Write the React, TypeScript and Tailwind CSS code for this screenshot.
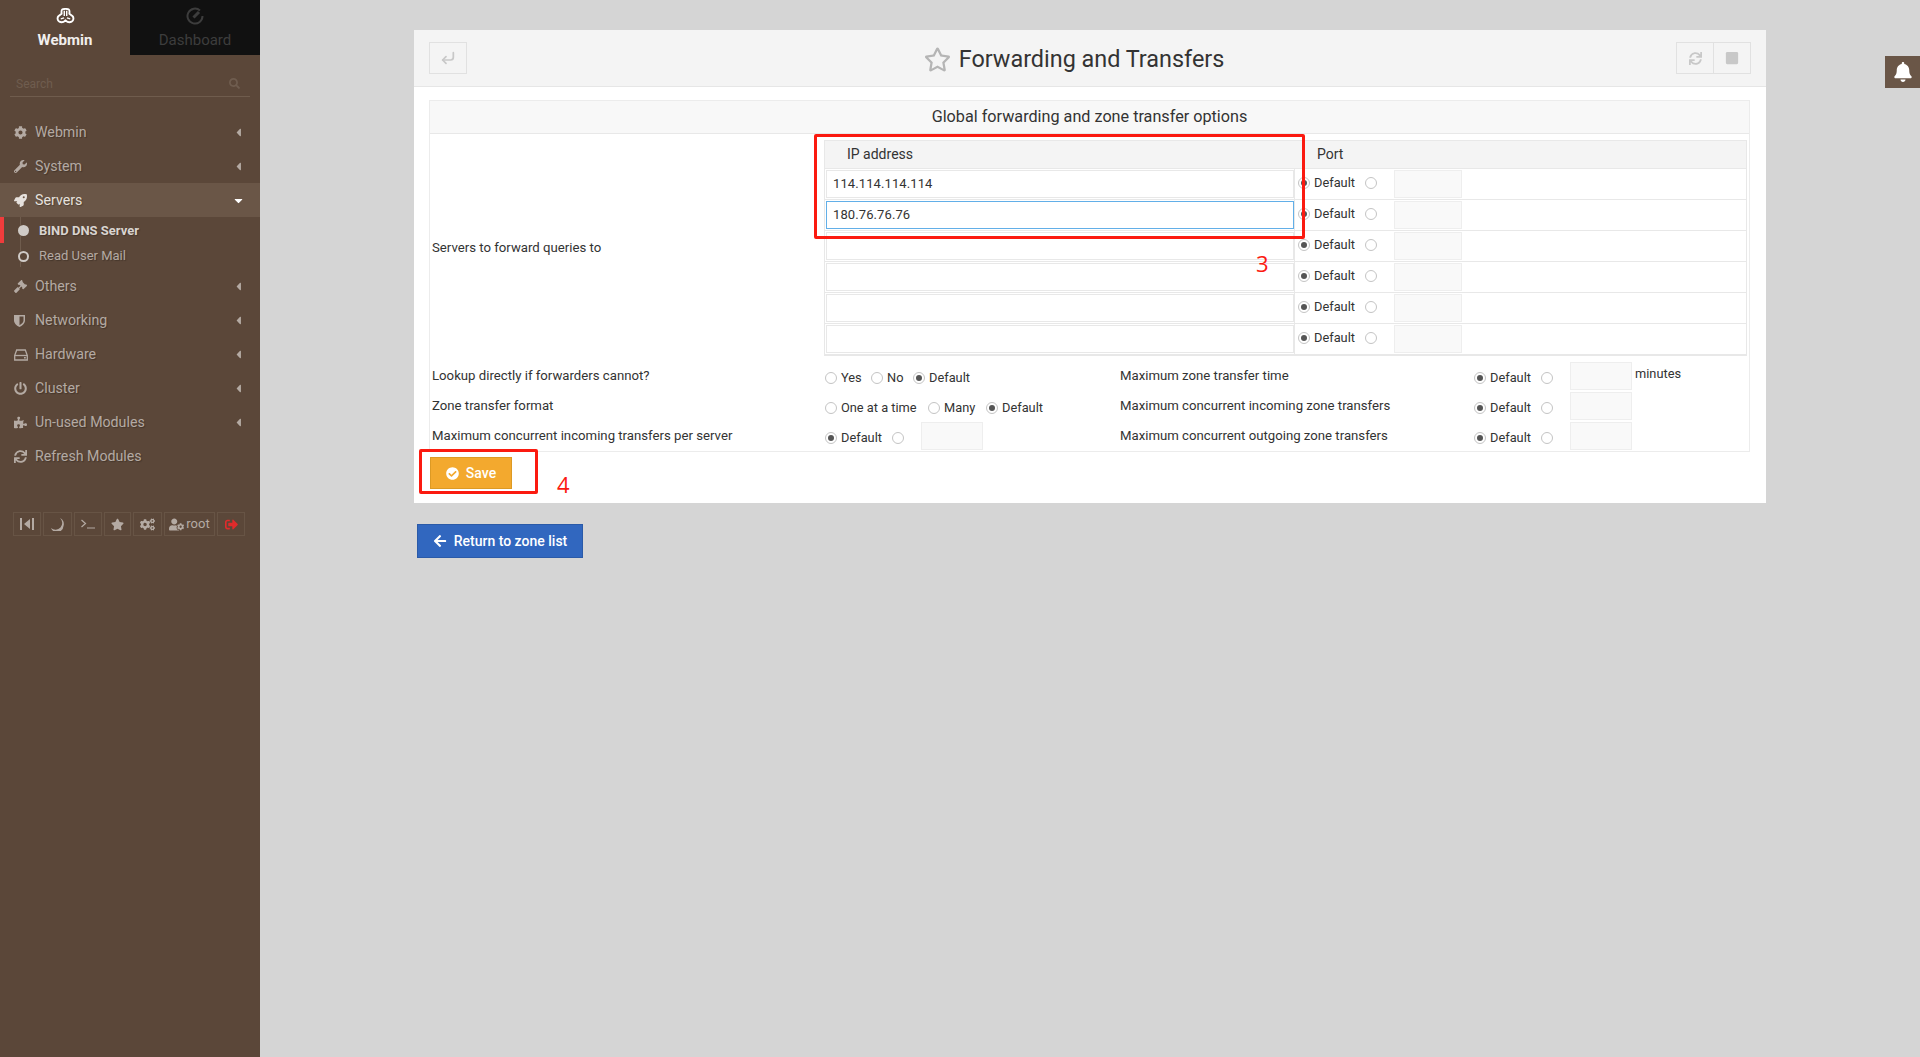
import React from "react";
import {
  FaCog, FaWrench, FaRocket, FaGavel, FaPowerOff, FaPuzzlePiece, FaSync,
  FaRegStar, FaBell, FaCheckCircle, FaArrowLeft, FaSignOutAlt, FaCogs, FaUserCog, FaStar, FaSearch, FaCaretLeft, FaCaretDown, FaStop,
} from "react-icons/fa";
import { CornerDownLeft } from "lucide-react";

function Logo() {
  return (
    <svg width="19" height="17" viewBox="0 0 20 18" fill="none" stroke="#fff" strokeWidth="2" strokeLinejoin="round" className="block">
      <path d="M6.500 1.500c1-.7 6-.7 7 0 .8.6.8 3 .6 4.500l3.200 2.500c1.800 1.600 1.200 5-.8 6-1.800.9-4.500.6-6.500-1.500-2 2.100-4.700 2.400-6.500 1.500-2-1-2.600-4.400-.8-6L5.900 6c-.2-1.500-.2-3.900.6-4.500z" />
      <path d="M8.700 3v5.500M11.300 3v5.500M5 11.500l3.500-1M15 11.500l-3.500-1" strokeWidth="1.500" />
    </svg>
  );
}

function Gauge() {
  return (
    <svg width="18" height="18" viewBox="0 0 18 18" fill="none" stroke="#3d3d3d" strokeWidth="2" className="block">
      <path d="M14 3.500A7.500 7.500 0 1 0 16.500 9" />
      <path d="M7.500 10.500 13 5" strokeWidth="3" />
    </svg>
  );
}

function Shield() {
  return (
    <svg width="11" height="13" viewBox="0 0 11 13" fill="#b4aaa3" className="block">
      <path d="M0 1h11v5.500c0 3-3 5.300-5.500 6.500C3 11.800 0 9.500 0 6.500zM5.500 2.500v8.700c1.800-1 4-2.800 4-4.700v-4z" fillRule="evenodd" />
    </svg>
  );
}

function Hdd() {
  return (
    <svg width="14" height="12" viewBox="0 0 14 12" fill="none" stroke="#b4aaa3" strokeWidth="1.300" className="block">
      <path d="M.7 6.500 2.700 1h8.600l2 5.500V11H.7z" />
      <path d="M.7 6.500h12.600" />
      <path d="M10 8.800h1.800" strokeWidth="1.500" />
    </svg>
  );
}

function MenuItem({ icon, label, open, active, arrow = true }: { icon: React.ReactNode; label: string; open?: boolean; active?: boolean; arrow?: boolean }) {
  return (
    <div className={`flex h-[34px] items-center pl-[14px] pr-[15px] pt-[1px] text-[14.200px] [text-shadow:1px_1px_1px_rgba(0,0,0,0.25)] ${active ? "bg-[#6a5647] text-[#e6e1dd]" : "text-[#b4aaa3]"}`}>
      <span className="flex w-[21px] shrink-0 items-center text-[13px]">{icon}</span>
      <span className="flex-1">{label}</span>
      {arrow && (open ? <FaCaretDown className="text-[13px] text-white" /> : <FaCaretLeft className="text-[13px]" />)}
    </div>
  );
}

function SideBtn({ w, children }: { w: string; children: React.ReactNode }) {
  return <div className={`flex h-[24px] items-center justify-center gap-[2px] border border-[#675445] text-[13px] text-[#b4aaa3] ${w}`}>{children}</div>;
}

function Sidebar() {
  return (
    <aside className="flex w-[260px] shrink-0 flex-col bg-[#5b4739]">
      <div className="flex h-[55px]">
        <div className="flex w-[130px] flex-col items-center pt-[8px] text-[15px] font-bold text-[#f2efed]">
          <Logo />
          <span className="mt-[7px] leading-[17px]">Webmin</span>
        </div>
        <div className="flex w-[130px] flex-col items-center bg-[#111111] pt-[7px] text-[15px] text-[#3d3d3d]">
          <Gauge />
          <span className="mt-[7px] leading-[17px]">Dashboard</span>
        </div>
      </div>
      <div className="mx-[10px] mt-[18px] flex h-[24px] items-center justify-between border-b border-[#6f5c4d] pb-[2px] pl-[6px] pr-[10px] text-[12px] text-[#6f5d4f]">
        <span>Search</span>
        <FaSearch className="text-[11px]" />
      </div>
      <div className="mt-[18px] flex flex-col">
        <MenuItem icon={<FaCog />} label="Webmin" />
        <MenuItem icon={<FaWrench />} label="System" />
        <MenuItem icon={<FaRocket />} label="Servers" open active />
        <div className="relative flex h-[52px] flex-col text-[13px] [text-shadow:1px_1px_1px_rgba(0,0,0,0.25)]">
          <div className="absolute bottom-[2px] left-[20px] top-0 w-px bg-[#6f5c4d]" />
          <div className="flex h-[26px] items-center border-l-4 border-[#f03c3c] pl-[14px] pt-[1px] font-bold text-[#d9d4d0]">
            <span className="z-10 mr-[10px] h-[11px] w-[11px] rounded-full bg-[#d0cbc7]" />
            <span>BIND DNS Server</span>
          </div>
          <div className="flex h-[25px] items-center pl-[18px] pt-[1px] text-[#b4aaa3]">
            <span className="z-10 mr-[10px] h-[11px] w-[11px] rounded-full border-2 border-[#d0cbc7] bg-[#5b4739]" />
            <span>Read User Mail</span>
          </div>
        </div>
        <MenuItem icon={<FaGavel />} label="Others" />
        <MenuItem icon={<Shield />} label="Networking" />
        <MenuItem icon={<Hdd />} label="Hardware" />
        <MenuItem icon={<FaPowerOff />} label="Cluster" />
        <MenuItem icon={<FaPuzzlePiece />} label="Un-used Modules" />
        <MenuItem icon={<FaSync />} label="Refresh Modules" arrow={false} />
      </div>
      <div className="ml-[13px] mt-[39px] flex gap-[2px]">
        <SideBtn w="w-[28px]">
          <svg width="14" height="12" viewBox="0 0 14 12" fill="#b4aaa3"><rect x="0" y="0" width="2" height="12" /><rect x="12" y="0" width="2" height="12" /><path d="M10 1v10L4 6z" /></svg>
        </SideBtn>
        <SideBtn w="w-[29px]">
          <svg width="13" height="13" viewBox="0 0 13 13" fill="#b4aaa3"><path d="M9 0a6.500 6.500 0 0 1-9 10 6.500 6.500 0 0 0 12.500-2A6.500 6.500 0 0 0 9 0z" /></svg>
        </SideBtn>
        <SideBtn w="w-[28px]">
          <svg width="14" height="10" viewBox="0 0 14 10" fill="none" stroke="#b4aaa3" strokeWidth="1.200"><path d="M0.500 1 4.500 4.500 0.500 8M6 9h8" /></svg>
        </SideBtn>
        <SideBtn w="w-[27px]"><FaStar /></SideBtn>
        <SideBtn w="w-[29px]"><FaCogs className="text-[15px]" /></SideBtn>
        <SideBtn w="w-[51px]"><FaUserCog className="text-[15px]" /><span className="mb-[2px] text-[13px] leading-[13px]">root</span></SideBtn>
        <SideBtn w="w-[28px]"><FaSignOutAlt className="text-[#e02b2b]" /></SideBtn>
      </div>
    </aside>
  );
}

function Radio({ on }: { on?: boolean }) {
  return (
    <span className="flex h-[12px] w-[12px] shrink-0 items-center justify-center rounded-full border border-[#c4c4c4] bg-white">
      {on && <span className="h-[6px] w-[6px] rounded-full bg-[#555555]" />}
    </span>
  );
}

function Num({ w = "w-[62px]", h = "h-[28px]" }: { w?: string; h?: string }) {
  return <span className={`block shrink-0 border border-[#eeeeee] bg-[#f9f9f9] ${w} ${h}`} />;
}

function IpRow({ value, focus }: { value?: string; focus?: boolean }) {
  return (
    <div className="flex h-[31px] border-b border-[#e8e8e8]">
      <div className="flex w-[470px] items-center border-r border-[#e8e8e8] pl-[1px]">
        <input
          readOnly
          value={value ?? ""}
          className={`h-[28px] w-[468px] border bg-white pb-[2px] pl-[6px] text-[13px] tracking-[0.1px] text-[#333333] outline-none ${focus ? "border-[#62afe8]" : "border-[#e8e8e8]"}`}
        />
      </div>
      <div className="flex items-center pl-[3px] text-[12.800px] text-[#333333]">
        <span className="flex items-center pb-[2px]">
          <Radio on />
          <span className="ml-[4px] w-[51px]">Default</span>
          <Radio />
        </span>
        <span className="ml-[17px]"><Num w="w-[68px]" /></span>
      </div>
    </div>
  );
}

function Opt({ label, on, gap }: { label: string; on?: boolean; gap: string }) {
  return (
    <span className={`flex items-center ${gap}`}>
      <Radio on={on} />
      <span className="ml-[4px]">{label}</span>
    </span>
  );
}

function Label({ children }: { children: React.ReactNode }) {
  return <div className="flex h-[30px] items-center pb-[1px] pl-[2px] text-[13.200px] text-[#333333]">{children}</div>;
}

function Options({ children }: { children: React.ReactNode }) {
  return <div className="flex h-[30px] items-center pl-[1px] pt-[3px] text-[12.800px] text-[#333333]">{children}</div>;
}

function LimitCell({ minutes }: { minutes?: boolean }) {
  return (
    <div className="flex h-[30px] items-center pl-[5px] text-[12.800px] text-[#333333]">
      <span className="flex items-center pt-[3px]">
        <Radio on />
        <span className="ml-[4px] w-[51px]">Default</span>
        <Radio />
      </span>
      <span className="ml-[17px]"><Num /></span>
      {minutes && <span className="mb-[5px] ml-[3px]">minutes</span>}
    </div>
  );
}

function HeadBtn({ children, cls }: { children: React.ReactNode; cls: string }) {
  return <div className={`flex h-[32px] items-center justify-center border border-[#e1e1e1] text-[#c8c8c8] ${cls}`}>{children}</div>;
}

function Panel() {
  return (
    <div className="ml-[154px] mt-[30px] h-[473px] w-[1352px] bg-white">
      <div className="flex h-[57px] items-center justify-between border-b border-[#e6e6e6] bg-[#f4f4f4] px-[15px]">
        <HeadBtn cls="w-[38px]"><CornerDownLeft size={16} strokeWidth={2.600} /></HeadBtn>
        <div className="flex items-center gap-[8px] pl-[5px] pt-[2px] text-[#333333]">
          <FaRegStar className="text-[27px] text-[#b5b5b5]" />
          <span className="text-[23.400px] leading-[30px]">Forwarding and Transfers</span>
        </div>
        <div className="flex">
          <HeadBtn cls="w-[38px]"><FaSync className="text-[13px]" /></HeadBtn>
          <HeadBtn cls="w-[37px] border-l-0"><FaStop className="text-[14px]" /></HeadBtn>
        </div>
      </div>
      <div className="ml-[15px] mt-[13px] w-[1321px] border border-[#ececec]">
        <div className="flex h-[33px] items-center justify-center border-b border-[#e8e8e8] bg-[#f8f8f8] text-[16.200px] text-[#333333]">
          Global forwarding and zone transfer options
        </div>
        <div className="flex pb-[5px] pt-[6px]">
          <div className="flex w-[394px] items-center pl-[2px] text-[13.200px] text-[#333333]">Servers to forward queries to</div>
          <div className="w-[923px] border border-[#e8e8e8]">
            <div className="flex h-[28px] items-center border-b border-[#e8e8e8] bg-[#f4f4f4] text-[14px] text-[#333333]">
              <span className="w-[470px] pl-[22px]">IP address</span>
              <span className="pl-[22px]">Port</span>
            </div>
            <IpRow value="114.114.114.114" />
            <IpRow value="180.76.76.76" focus />
            <IpRow />
            <IpRow />
            <IpRow />
            <IpRow />
          </div>
        </div>
        <div className="grid grid-cols-[394px_294px_351px_1fr]">
          <Label>Lookup directly if forwarders cannot?</Label>
          <Options>
            <Opt label="Yes" gap="w-[46px]" />
            <Opt label="No" gap="w-[42px]" />
            <Opt label="Default" on gap="" />
          </Options>
          <Label>Maximum zone transfer time</Label>
          <LimitCell minutes />

          <Label>Zone transfer format</Label>
          <Options>
            <Opt label="One at a time" gap="w-[103px]" />
            <Opt label="Many" gap="w-[58px]" />
            <Opt label="Default" on gap="" />
          </Options>
          <Label>Maximum concurrent incoming zone transfers</Label>
          <LimitCell />

          <Label>Maximum concurrent incoming transfers per server</Label>
          <Options>
            <Radio on />
            <span className="ml-[4px] w-[51px]">Default</span>
            <Radio />
            <span className="ml-[17px] -mt-[3px]"><Num /></span>
          </Options>
          <Label>Maximum concurrent outgoing zone transfers</Label>
          <LimitCell />
        </div>
      </div>
      <button className="ml-[16px] mt-[5px] flex h-[32px] w-[82px] items-center justify-center gap-[7px] border border-[#dd9a24] bg-[#f3a92e] text-[14px] font-medium text-white">
        <FaCheckCircle className="text-[13px]" />
        Save
      </button>
    </div>
  );
}

export default function App() {
  return (
    <div className="relative flex h-[1057px] w-full overflow-hidden bg-[#d5d5d5] font-['Roboto',sans-serif]">
      <Sidebar />
      <main className="flex-1">
        <Panel />
        <button className="ml-[157px] mt-[21px] flex h-[34px] w-[166px] items-center justify-center gap-[7px] border border-[#2a5aa8] bg-[#3167bf] text-[14px] font-medium text-white">
          <FaArrowLeft className="text-[14px]" />
          Return to zone list
        </button>
      </main>
      <div className="absolute right-0 top-[56px] flex h-[32px] w-[35px] items-center justify-center bg-[#6a5647] text-[20px] text-white">
        <FaBell />
      </div>
      <div className="absolute left-[814px] top-[134px] h-[105px] w-[491px] rounded-[2px] border-[3px] border-[#fb1a10]" />
      <div className="absolute left-[419px] top-[449px] h-[45px] w-[119px] rounded-[2px] border-[3px] border-[#fb1a10]" />
      <span className="absolute left-[1256px] top-[250px] font-['Open_Sans',sans-serif] text-[22px] leading-[27px] text-[#fb1a10]">3</span>
      <span className="absolute left-[557px] top-[471px] font-['Open_Sans',sans-serif] text-[22px] leading-[27px] text-[#fb1a10]">4</span>
    </div>
  );
}
